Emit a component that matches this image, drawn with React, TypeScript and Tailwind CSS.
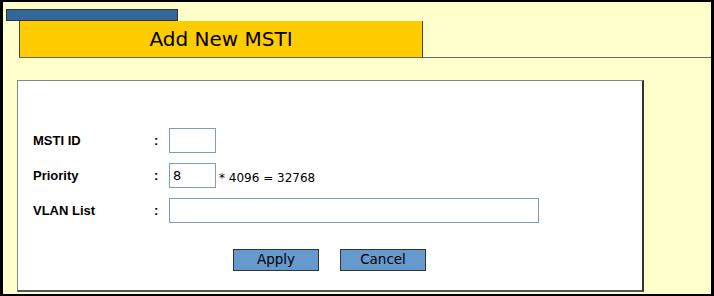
export default function App() {
  return (
    <div className="w-[714px] h-[296px] bg-[#FFFFCC] border-black border-l-[3px] border-r-[3px] border-t-2 border-b-2 flex flex-col overflow-hidden">
      <div className="ml-[3px] mt-[7px] w-[172px] h-[12px] bg-[#336699] border border-[#333]" />
      <div className="ml-[16px] flex border-b border-[#666]">
        <div className="w-[404px] h-[36px] bg-[#FFCC00] border-l border-r border-t-0 border-[#444] flex items-center justify-center font-['DejaVu_Sans',sans-serif] text-[20px] text-black">
          Add New MSTI
        </div>
      </div>
      <div className="ml-[14px] mt-[22px] w-[627px] h-[212px] bg-white border border-[#888] border-r-2 border-b-2 border-r-[#333] border-b-[#555] flex flex-col font-['Liberation_Sans',Arial,sans-serif]">
        <div className="mt-[47px] ml-[15px] flex flex-col gap-[10px] text-[13px] text-black">
          <div className="flex items-center h-[25px]">
            <span className="w-[121px] font-bold">MSTI ID</span>
            <span className="w-[15px] font-bold">:</span>
            <input className="w-[47px] h-[25px] border border-[#7F9DB9] px-1 outline-none" />
          </div>
          <div className="flex items-center h-[25px]">
            <span className="w-[121px] font-bold">Priority</span>
            <span className="w-[15px] font-bold">:</span>
            <input
              defaultValue="8"
              className="w-[47px] h-[25px] border border-[#7F9DB9] px-[3px] outline-none text-[13px] font-['DejaVu_Sans',sans-serif]"
            />
            <span className="ml-[3px] text-[12px] mt-[4px] font-['DejaVu_Sans',sans-serif]">* 4096 = 32768</span>
          </div>
          <div className="flex items-center h-[25px]">
            <span className="w-[121px] font-bold">VLAN List</span>
            <span className="w-[15px] font-bold">:</span>
            <input className="w-[370px] h-[25px] border border-[#7F9DB9] px-1 outline-none" />
          </div>
        </div>
        <div className="mt-[26px] ml-[215px] flex gap-[21px] font-['DejaVu_Sans',sans-serif] text-[13.5px]">
          <button className="w-[86px] h-[22px] bg-[#6699CC] border border-[#333] text-black leading-none">
            Apply
          </button>
          <button className="w-[86px] h-[22px] bg-[#6699CC] border border-[#333] text-black leading-none">
            Cancel
          </button>
        </div>
      </div>
    </div>
  );
}
